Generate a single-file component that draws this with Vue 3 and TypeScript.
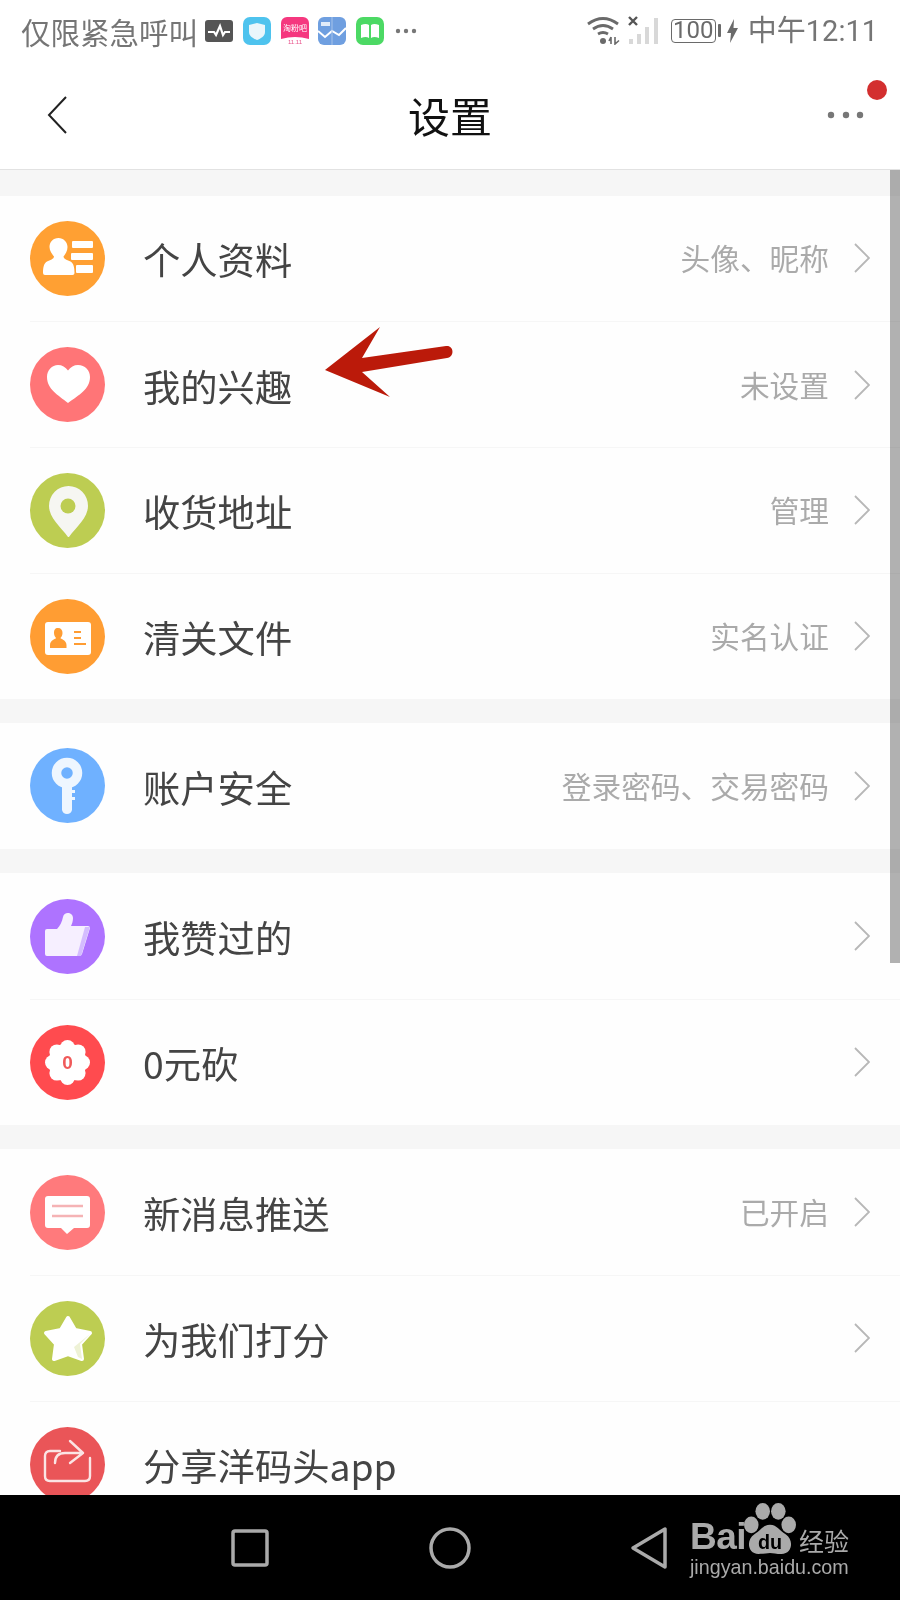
<script setup lang="ts">
interface Row {
  icon: string
  color: string
  label: string
  hint?: string
  noChevron?: boolean
}

const groups: Row[][] = [
  [
    { icon: 'profile', color: '#ffa033', label: '个人资料', hint: '头像、昵称' },
    { icon: 'heart', color: '#ff7577', label: '我的兴趣', hint: '未设置' },
    { icon: 'pin', color: '#bdcd52', label: '收货地址', hint: '管理' },
    { icon: 'card', color: '#ff9d33', label: '清关文件', hint: '实名认证' },
  ],
  [{ icon: 'key', color: '#6fb1ff', label: '账户安全', hint: '登录密码、交易密码' }],
  [
    { icon: 'thumb', color: '#ae73ff', label: '我赞过的' },
    { icon: 'badge', color: '#ff4b4f', label: '0元砍' },
  ],
  [
    { icon: 'message', color: '#ff7a7c', label: '新消息推送', hint: '已开启' },
    { icon: 'star', color: '#bdcd52', label: '为我们打分' },
    { icon: 'share', color: '#ea5558', label: '分享洋码头app', noChevron: true },
  ],
]
</script>

<template>
  <div class="screen">
    <div class="status">
      <span class="status-text">仅限紧急呼叫</span>
      <svg class="ni ni-dark" width="28" height="28" viewBox="0 0 28 28">
        <rect x="0" y="3" width="28" height="22" rx="3" fill="#555" />
        <path d="M3 15h6l2 3 4-9 3 9 2-3h5" fill="none" stroke="#fff" stroke-width="2.2" />
      </svg>
      <svg class="ni" width="28" height="28" viewBox="0 0 28 28">
        <rect width="28" height="28" rx="7" fill="#4ec3ee" />
        <path d="M14 6l8 2v7c0 4-4 6.500-8 8-4-1.500-8-4-8-8V8z" fill="#e9f6fb" />
      </svg>
      <svg class="ni" width="28" height="28" viewBox="0 0 28 28">
        <path d="M0 6a6 6 0 0 1 6-6h16a6 6 0 0 1 6 6v16q-14-4-28 0z" fill="#f5387f" />
        <text x="14" y="14" text-anchor="middle" font-size="8" fill="#fff" font-family="'Noto Sans CJK SC',sans-serif">淘粉吧</text>
        <text x="14" y="27" text-anchor="middle" font-size="6" fill="#e8508a" font-family="'Liberation Sans',sans-serif">11.11</text>
      </svg>
      <svg class="ni" width="28" height="28" viewBox="0 0 28 28">
        <rect width="28" height="28" rx="6" fill="#6f9fe0" />
        <path d="M0 14l7 6 7-6 7 4 7-7" fill="none" stroke="#fff" stroke-width="2" />
        <path d="M14 0v28" stroke="#a7c3ea" stroke-width="1" />
        <rect x="3" y="5" width="9" height="4" fill="#fff" opacity=".8" />
      </svg>
      <svg class="ni" width="28" height="28" viewBox="0 0 28 28">
        <rect width="28" height="28" rx="7" fill="#4cd964" />
        <path d="M5 8q5-2 8 0v13q-3-2-8 0zM15 8q3-2 8 0v13q-5-2-8 0z" fill="#fff" />
      </svg>
      <svg class="ni-more" width="22" height="6" viewBox="0 0 22 6">
        <circle cx="3" cy="3" r="2.200" fill="#777" />
        <circle cx="11" cy="3" r="2.200" fill="#777" />
        <circle cx="19" cy="3" r="2.200" fill="#777" />
      </svg>
      <span class="status-fill"></span>
      <svg width="34" height="28" viewBox="0 0 34 28">
        <path d="M1 7q15-11 30 0M6 12q10-7 20 0M11 17q5-3 10 0" fill="none" stroke="#6a6a6a" stroke-width="2.800" />
        <circle cx="16" cy="24" r="3" fill="#6a6a6a" />
        <path d="M24 20v7M22 24l2-4M28 20v7l4-3.500" fill="none" stroke="#6a6a6a" stroke-width="1.600" />
      </svg>
      <svg class="signal" width="32" height="30" viewBox="0 0 32 30">
        <path d="M1 1l8 8M9 1l-8 8" stroke="#555" stroke-width="2.400" />
        <rect x="1" y="23" width="4" height="5" fill="#d8d8d8" />
        <rect x="9" y="18" width="4" height="10" fill="#d8d8d8" />
        <rect x="17" y="11" width="4" height="17" fill="#d8d8d8" />
        <rect x="26" y="2" width="4" height="26" fill="#d8d8d8" />
      </svg>
      <span class="battery">100</span>
      <span class="battery-nub"></span>
      <svg class="bolt" width="11" height="24" viewBox="0 0 11 24">
        <path d="M7 0L0 14h4l-1 10 8-15H6.500z" fill="#6a6a6a" />
      </svg>
      <span class="status-time">中午12:11</span>
    </div>

    <header class="bar">
      <svg class="back" width="22" height="40" viewBox="0 0 22 40">
        <path d="M20 2L3 20l17 18" fill="none" stroke="#222" stroke-width="2" />
      </svg>
      <h1 class="title">设置</h1>
      <svg class="more" width="40" height="8" viewBox="0 0 40 8">
        <circle cx="5" cy="4" r="3.200" fill="#777" />
        <circle cx="20" cy="4" r="3.200" fill="#777" />
        <circle cx="34" cy="4" r="3.200" fill="#777" />
      </svg>
      <span class="dot"></span>
    </header>

    <main class="content">
      <section v-for="(group, g) in groups" :key="g" class="group">
        <div v-for="row in group" :key="row.label" class="row">
          <svg class="icon" width="75" height="75" viewBox="0 0 75 75">
            <circle cx="37.500" cy="37.500" r="37.500" :fill="row.color" />
            <g v-if="row.icon === 'profile'" fill="#fff">
              <path d="M28.500 17c5 0 9 4 9 9 0 4-2 7-4 9.500 0 2.500 4 3.500 7 5 3 1.500 4 6 4 11.500q0 2-2 2H15q-2 0-2-2c0-5.500 1-10 4-11.500 3-1.500 7-2.500 7-5-2-2.500-4.500-5.500-4.500-9.500 0-5 3.500-9 9-9z" />
              <rect x="42" y="20" width="21" height="7" rx="1" />
              <rect x="41" y="32" width="22" height="7" rx="1" />
              <rect x="46" y="44" width="17" height="8" rx="1" />
            </g>
            <path v-else-if="row.icon === 'heart'" d="M38 56C28 48 17 42 17 30c0-7 5-12 11-12 4 0 7.500 2 10 5.500 2.500-3.500 6-5.500 10-5.500 7 0 12 5 12 12 0 12-11 18-22 26z" fill="#fff" />
            <g v-else-if="row.icon === 'pin'">
              <path d="M38 64C31 54 19 45 19 33a19.500 20 0 0 1 39 0c0 12-12 21-19 31z" fill="#f6f6f2" />
              <circle cx="38" cy="33" r="7.500" :fill="row.color" />
            </g>
            <g v-else-if="row.icon === 'card'">
              <rect x="15" y="23" width="46" height="33" rx="3" fill="#fff" />
              <path d="M28 29c3 0 4.500 2 4.500 5 0 2-1 4-2 5 0 1 6 2 6 7v3H20v-3c0-5 6-6 6-7-1-1-2-3-2-5 0-3 1-5 4-5z" fill="#ff9d33" />
              <path d="M44 33h7M44 39h7M44 45h12" stroke="#ff9d33" stroke-width="2" />
            </g>
            <g v-else-if="row.icon === 'key'">
              <circle cx="37" cy="25" r="10.500" fill="none" stroke="#eef6ff" stroke-width="9.500" />
              <path d="M32 34h10v8h3v3h-3v4h3v3h-3v10q-1 4-5 4t-5-4z" fill="#eef6ff" />
            </g>
            <g v-else-if="row.icon === 'thumb'">
              <path d="M15 32q0-2 2-2h10c3-3 5-7 6-12 1-6 10-5 10 1 0 3-1 6-2 8h17q2 0 2 2l-8 26q-1 2-3 2H17q-2 0-2-2z" fill="#f6efff" />
              <path d="M60 28l-9 29h-4l8-29z" fill="#d4bcff" />
            </g>
            <g v-else-if="row.icon === 'badge'">
              <g fill="#fff">
                <circle cx="37.500" cy="37.500" r="19" />
                <circle cx="52.500" cy="37.500" r="7.500" />
                <circle cx="48.100" cy="48.100" r="7.500" />
                <circle cx="37.500" cy="52.500" r="7.500" />
                <circle cx="26.900" cy="48.100" r="7.500" />
                <circle cx="22.500" cy="37.500" r="7.500" />
                <circle cx="26.900" cy="26.900" r="7.500" />
                <circle cx="37.500" cy="22.500" r="7.500" />
                <circle cx="48.100" cy="26.900" r="7.500" />
              </g>
              <text x="37.500" y="44" text-anchor="middle" font-size="19" font-weight="700" fill="#f05a5a" font-family="'Liberation Sans',sans-serif">0</text>
            </g>
            <g v-else-if="row.icon === 'message'">
              <path d="M18 21h39q3 0 3 3v26q0 3-3 3H44l-7 6-6-6H18q-3 0-3-3V24q0-3 3-3z" fill="#fff" />
              <path d="M22 31h31M22 41h31" stroke="#f5b3b5" stroke-width="2.400" />
            </g>
            <g v-else-if="row.icon === 'star'">
              <path d="M38 17l7 12 15 3-10 11 2 15-14-5-14 5 2-15-10-11 15-3z" fill="#fff" stroke="#fff" stroke-width="4" stroke-linejoin="round" />
              <path d="M60 33L50 43l2 15-4-2-4-10z" fill="#eef2d6" />
            </g>
            <g v-else fill="none" stroke="#fbe4e4" stroke-width="2.400" stroke-linecap="round" stroke-linejoin="round">
              <path d="M30 24H20q-5 0-5 5v20q0 5 5 5h35q5 0 5-5V31" />
              <path d="M25 36q0-10 10-10h18M40 14l13 12-13 10" />
            </g>
          </svg>
          <span class="label">{{ row.label }}</span>
          <span class="hint">{{ row.hint }}</span>
          <svg v-if="!row.noChevron" class="chevron" width="16" height="30" viewBox="0 0 16 30">
            <path d="M1 1l14 14L1 29" fill="none" stroke="#b7b7b7" stroke-width="1.800" />
          </svg>
        </div>
      </section>
    </main>

    <nav class="softkeys">
      <svg width="44" height="44" viewBox="0 0 44 44">
        <rect x="5" y="5" width="34" height="34" rx="2" fill="none" stroke="#aaa" stroke-width="3.500" />
      </svg>
      <svg width="44" height="44" viewBox="0 0 44 44">
        <circle cx="22" cy="22" r="19" fill="none" stroke="#aaa" stroke-width="3.500" />
      </svg>
      <svg width="44" height="44" viewBox="0 0 44 44">
        <path d="M5 22L37 3v38z" fill="none" stroke="#aaa" stroke-width="3.500" stroke-linejoin="round" />
      </svg>
    </nav>

    <svg class="arrow" width="132" height="72" viewBox="0 0 132 72">
      <path d="M1 44L56 1 38 32l84-12c8-1 9 11 1 12L38 46l28 25z" fill="#bb1a0a" />
    </svg>

    <div class="scrollbar"></div>

    <div class="watermark">
      <div class="wm-brand">
        <span class="wm-bai">Bai</span>
        <svg class="wm-paw" width="52" height="52" viewBox="0 0 50 50">
          <g fill="#aaa">
            <ellipse cx="18" cy="8" rx="7" ry="8" />
            <ellipse cx="33" cy="8" rx="7" ry="8" />
            <ellipse cx="7" cy="21" rx="7" ry="8" />
            <ellipse cx="43" cy="21" rx="7" ry="8" />
            <path d="M25 21c7 0 9 6 15 9 8 5 7 19-4 19-5 0-8-1-11-1s-6 1-11 1c-11 0-12-14-4-19 6-3 8-9 15-9z" />
          </g>
          <text x="25" y="44" text-anchor="middle" font-size="19" font-weight="700" fill="#000" font-family="'Liberation Sans',sans-serif">du</text>
        </svg>
        <span class="wm-cn">经验</span>
      </div>
      <div class="wm-url">jingyan.baidu.com</div>
    </div>
  </div>
</template>

<style scoped>
.screen {
  position: relative;
  width: 900px;
  height: 1600px;
  display: flex;
  flex-direction: column;
  overflow: hidden;
  background: #f6f6f6;
  font-family: "Noto Sans CJK SC", "Liberation Sans", sans-serif;
  filter: blur(0.4px);
}
.status {
  height: 60px;
  flex: none;
  display: flex;
  align-items: center;
  padding: 1px 22px 0 21px;
  background: #fff;
  color: #757575;
  box-sizing: border-box;
}
.status-text {
  font-size: 29.500px;
  line-height: 40px;
  margin-right: 7px;
}
.ni {
  margin-right: 9.500px;
}
.ni-dark {
  margin-right: 10px;
}
.ni-more {
  margin-left: 2px;
}
.status-fill {
  flex: 1;
}
.signal {
  margin: 0 0 0 7px;
}
.battery {
  width: 45px;
  height: 24px;
  margin-left: 11px;
  border: 1.500px solid #6a6a6a;
  border-radius: 4px;
  box-sizing: border-box;
  text-align: center;
  font: 24px/21px "Roboto", "Liberation Sans", sans-serif;
  color: #6a6a6a;
}
.battery-nub {
  width: 3px;
  height: 13px;
  margin: 0 6px 0 2px;
  background: #6a6a6a;
  border-radius: 1px;
}
.bolt {
  margin-right: 10px;
}
.status-time {
  font-family: "Roboto", "Noto Sans CJK SC", sans-serif;
  font-size: 29px;
  line-height: 40px;
}
.bar {
  position: relative;
  height: 110px;
  flex: none;
  display: grid;
  grid-template-columns: 1fr auto 1fr;
  align-items: center;
  padding: 0 34px 0 46px;
  background: #fff;
  border-bottom: 1px solid #e2e2e2;
  box-sizing: border-box;
}
.back {
  justify-self: start;
}
.title {
  margin: 0;
  font-size: 42px;
  font-weight: 400;
  line-height: 50px;
  color: #111;
  transform: translateX(-6px);
}
.more {
  justify-self: end;
}
.dot {
  position: absolute;
  left: 867px;
  top: 20px;
  width: 20px;
  height: 20px;
  border-radius: 50%;
  background: #d32f2f;
}
.content {
  flex: 1;
  min-height: 0;
  overflow: hidden;
  padding-top: 25.500px;
  display: flex;
  flex-direction: column;
  gap: 24.500px;
}
.group {
  background: #fefefe;
  flex: none;
}
.row {
  height: 125.750px;
  box-sizing: border-box;
  margin-left: 30px;
  padding-right: 30px;
  display: flex;
  align-items: center;
  border-top: 1px solid #f6f6f6;
}
.row:first-child {
  border-top: none;
}
.icon {
  flex: none;
  margin-right: 38px;
}
.label {
  font-size: 37.300px;
  line-height: 50px;
  padding-top: 2px;
  color: #444;
  flex: 1;
}
.hint {
  font-size: 29.700px;
  line-height: 40px;
  color: #aaa;
  margin-right: 25px;
}
.chevron {
  flex: none;
}
.softkeys {
  height: 105px;
  flex: none;
  background: #000;
  display: flex;
  justify-content: center;
  align-items: center;
  gap: 156px;
}
.arrow {
  position: absolute;
  left: 324px;
  top: 326px;
}
.scrollbar {
  position: absolute;
  right: 0;
  top: 170px;
  width: 10px;
  height: 793px;
  background: rgba(0, 0, 0, 0.3);
}
.watermark {
  position: absolute;
  left: 690px;
  top: 1503px;
  color: #aaa;
}
.wm-brand {
  display: flex;
  align-items: flex-end;
  height: 52px;
}
.wm-bai {
  font: 700 37px/32px "Liberation Sans", sans-serif;
  width: 54px;
  letter-spacing: -0.500px;
  margin-bottom: 2px;
}
.wm-cn {
  font-size: 25px;
  line-height: 30px;
  margin-left: 3px;
  margin-bottom: 0;
}
.wm-url {
  font: 19.700px/26px "Liberation Sans", sans-serif;
  margin-top: -1px;
}
</style>
